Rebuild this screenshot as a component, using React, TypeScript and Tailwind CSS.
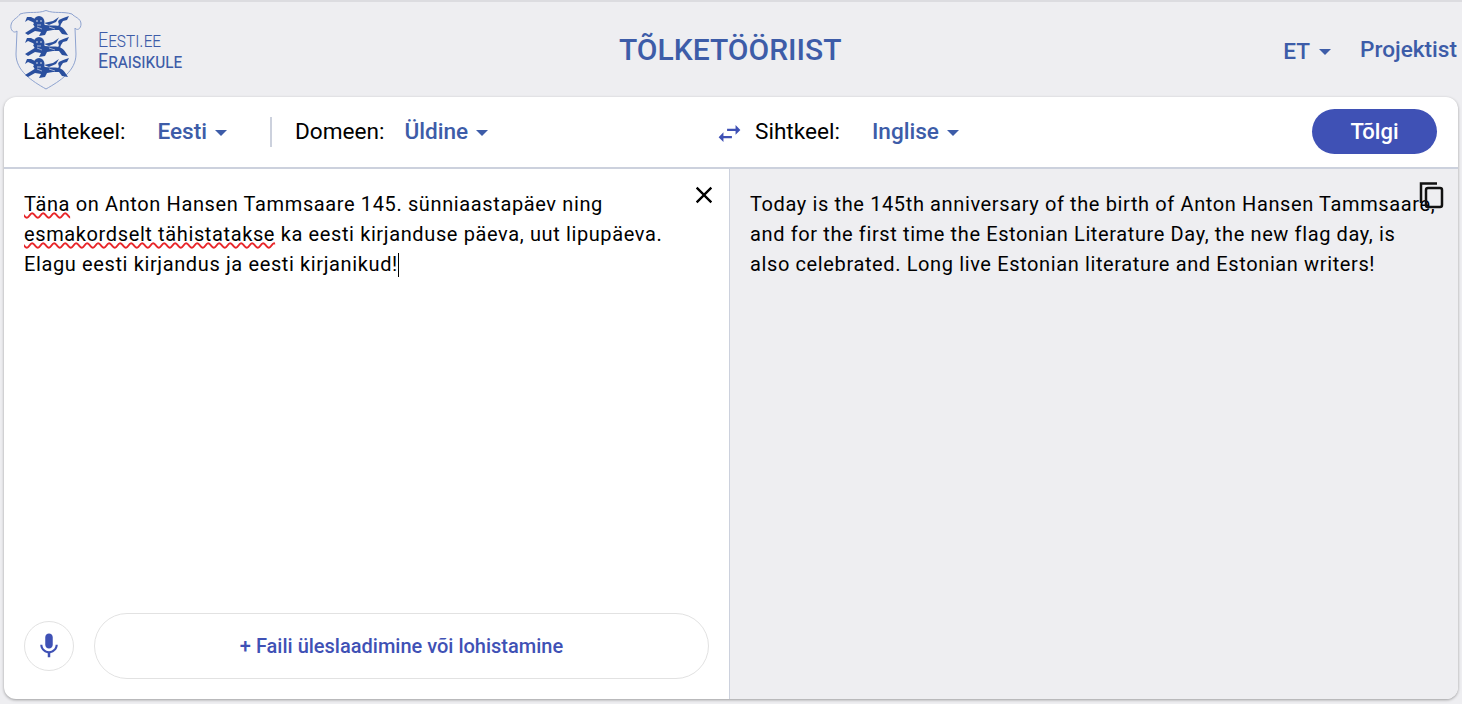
function Caret({ className = '' }: { className?: string }) {
    return <span className={`inline-block w-0 h-0 border-x-[6px] border-x-transparent border-t-[6px] border-t-[#3d5ca8] ${className}`} />;
}

function Lion() {
    return (
        <g fill="#2a4f9e">
            <ellipse cx="14" cy="6" rx="5.5" ry="6" />
            <path d="M8 8 L19 7 L21 13 L12 15 Z" />
            <path d="M14 8 C22 10 30 9 34 10 C38 11 40 14 43 19 L37 18 L34 14 L28 14 L22 15 L20 19 L14 20 L16 16 L10 15 L3 19 L0 17 L8 12 Z" />
            <path d="M10 7 L3 4 L0 6 L2 1 L6 1 L12 4 Z" />
            <path d="M33 10 C36 8 30 5 36 3 C38 2 41 1 44 0 L42 4 L38 5 L36 8 L35 11 Z" />
            <path d="M19 7 L28 5 L34 1 L31 6 L24 9 Z" />
            <circle cx="12" cy="5" r="0.8" fill="#eeeef1" />
            <circle cx="16" cy="5" r="0.8" fill="#eeeef1" />
            <path d="M12 9 H16" stroke="#eeeef1" strokeWidth="0.7" />
            <path d="M24 11 L30 13 M12 11 L17 13" stroke="#eeeef1" strokeWidth="0.6" />
        </g>
    );
}

function Logo() {
    return (
        <svg width="72" height="80" viewBox="0 0 72 80" className="shrink-0">
            <path d="M10 4 C20 1 27 4 36 0.5 C45 4 52 1 62 4 C64 7 71 8 71 14 C71 19 67 21 65 18 L66 44 C66 61 50 71 36 79 C22 71 6 61 6 44 L7 21 C4 24 0 20 1 15 C2 9 8 8 10 4 Z" fill="#eeeef1" stroke="#8ea3d0" strokeWidth="1" />
            <g transform="translate(15 6)"><Lion /></g>
            <g transform="translate(15 27)"><Lion /></g>
            <g transform="translate(15 48)"><Lion /></g>
        </svg>
    );
}

function Selector({ label, value, labelClass }: { label: string; value: string; labelClass: string }) {
    return (
        <div className="flex items-center">
            <span className={`text-[22.6px] leading-none text-black ${labelClass}`}>{label}</span>
            <span className="text-[22.6px] leading-none font-medium text-[#3d5ca8]">{value}</span>
            <Caret className="ml-[8px] mt-[2px]" />
        </div>
    );
}

const squiggle = 'underline decoration-wavy decoration-[#e8262a] decoration-[1.5px] [text-decoration-skip-ink:none]';

export default function App() {
    return (
        <div className="h-[704px] w-[1462px] overflow-hidden bg-[#eeeef1] border-t-2 border-[#dcdce0] font-['Roboto',sans-serif]">
            <header className="flex h-[95px] items-start">
                <div className="ml-[10px] mt-[8px] flex w-[190px] items-center">
                    <Logo />
                    <div className="ml-[16px] mt-[2px] origin-left scale-x-[0.85] whitespace-nowrap text-[21px] leading-[21px] font-light text-[#3d5ca8] [font-variant:small-caps]">
                        <div>Eesti.ee</div>
                        <div className="font-normal">Eraisikule</div>
                    </div>
                </div>
                <h1 className="ml-[419px] mt-[28px] text-[30px] leading-[40px] font-medium text-[#3d5ca8]">TÕLKETÖÖRIIST</h1>
                <div className="ml-auto mr-[5px] mt-[35px] flex items-center">
                    <span className="text-[22.6px] leading-[30px] font-medium text-[#3d5ca8]">ET</span>
                    <Caret className="ml-[9px]" />
                    <span className="ml-[29px] -mt-[4px] text-[22.6px] leading-[30px] font-medium text-[#3d5ca8]">Projektist</span>
                </div>
            </header>

            <main className="ml-[4px] flex h-[602px] w-[1454px] flex-col overflow-hidden rounded-[12px] bg-white shadow-[0_1px_3px_rgba(0,0,0,0.35)]">
                <div className="flex h-[72px] shrink-0 items-center border-b-2 border-[#ccd1dd]">
                    <div className="ml-[19px] w-[207px]">
                        <Selector label="Lähtekeel:" value="Eesti" labelClass="mr-[32px]" />
                    </div>
                    <div className="ml-[40px] h-[30px] w-[2px] bg-[#ccd1dd]" />
                    <div className="ml-[23px] w-[420px]">
                        <Selector label="Domeen:" value="Üldine" labelClass="mr-[20px]" />
                    </div>
                    <svg width="29" height="29" viewBox="0 0 24 24" className="mt-[3px] text-[#3f51b5]" fill="currentColor">
                        <path d="M6.99 11L3 15l3.99 4v-3H14v-2H6.99v-3zM21 9l-3.99-4v3H10v2h7.01v3L21 9z" />
                    </svg>
                    <div className="ml-[11px]">
                        <Selector label="Sihtkeel:" value="Inglise" labelClass="mr-[32px]" />
                    </div>
                    <button className="ml-auto mr-[21px] -mt-[2px] h-[45px] w-[125px] rounded-full bg-[#3f51b5] text-[22px] font-medium text-white">Tõlgi</button>
                </div>

                <div className="flex min-h-0 flex-1">
                    <section className="relative flex w-[726px] shrink-0 flex-col border-r border-[#ccd1dd]">
                        <div className="flex-1 pl-[20px] pr-[40px] pt-[20px] text-[20px] leading-[30px] tracking-[0.62px] text-black">
                            <span className={squiggle}>Täna</span> on Anton Hansen Tammsaare 145. sünniaastapäev ning{' '}
                            <span className={squiggle}>esmakordselt tähistatakse</span> ka eesti kirjanduse päeva, uut lipupäeva. Elagu eesti kirjandus ja eesti kirjanikud!
                            <span className="inline-block h-[24px] w-px bg-black align-[-6px]" />
                        </div>
                        <button className="absolute right-[11px] top-[12px] text-black">
                            <svg width="28" height="28" viewBox="0 0 24 24" fill="currentColor">
                                <path d="M19 6.41L17.59 5 12 10.59 6.41 5 5 6.41 10.59 12 5 17.59 6.41 19 12 13.41 17.59 19 19 17.59 13.41 12 19 6.41z" />
                            </svg>
                        </button>
                        <div className="flex items-center pb-[20px] pl-[20px] pr-[20px]">
                            <div className="flex h-[50px] w-[50px] items-center justify-center rounded-full border border-[#e2e2e2]">
                                <svg width="30" height="30" viewBox="0 0 24 24" fill="#3f51b5">
                                    <path d="M12 14c1.66 0 2.99-1.34 2.99-3L15 5c0-1.66-1.34-3-3-3S9 3.34 9 5v6c0 1.66 1.34 3 3 3zm5.3-3c0 3-2.54 5.1-5.3 5.1S6.7 14 6.7 11H5c0 3.41 2.72 6.23 6 6.72V21h2v-3.28c3.28-.48 6-3.3 6-6.72h-1.7z" />
                                </svg>
                            </div>
                            <div className="ml-[20px] flex h-[66px] flex-1 items-center justify-center rounded-full border border-[#e2e2e2] text-[20px] font-medium text-[#3f51b5]">
                                + Faili üleslaadimine või lohistamine
                            </div>
                        </div>
                    </section>
                    <section className="relative flex-1 bg-[#eeeef1] pl-[20px] pr-[20px] pt-[20px] text-[20px] leading-[30px] tracking-[0.62px] text-black">
                        Today is the 145th anniversary of the birth of Anton Hansen Tammsaare, and for the first time the Estonian Literature Day, the new flag day, is also celebrated. Long live Estonian literature and Estonian writers!
                        <svg width="26" height="28" viewBox="0 0 26 28" fill="none" stroke="#111" strokeWidth="2.5" className="absolute right-[13px] top-[12px]">
                            <path d="M2 22 V2.5 H18" />
                            <rect x="7" y="7" width="16" height="19" rx="2" />
                        </svg>
                    </section>
                </div>
            </main>
        </div>
    );
}
